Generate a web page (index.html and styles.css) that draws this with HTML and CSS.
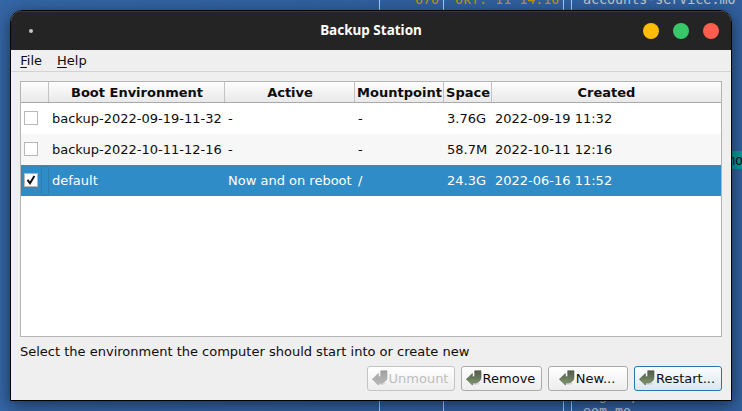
FILE: index.html
```html
<!DOCTYPE html>
<html lang="en">
<head>
<meta charset="utf-8">
<title>Backup Station</title>
<link rel="stylesheet" href="styles.css">
</head>
<body>
<svg class="defs" width="0" height="0" aria-hidden="true">
  <defs>
    <linearGradient id="g-green" x1="0" y1="0" x2="0" y2="1"><stop offset="0" stop-color="#555c50"/><stop offset=".5" stop-color="#66785a"/><stop offset="1" stop-color="#84a06e"/></linearGradient>
    <linearGradient id="g-gray" x1="0" y1="0" x2="0" y2="1"><stop offset="0" stop-color="#a2a2a2"/><stop offset="1" stop-color="#b8b8b8"/></linearGradient>
    <radialGradient id="g-shadow"><stop offset="0" stop-color="#000" stop-opacity=".2"/><stop offset="1" stop-color="#000" stop-opacity="0"/></radialGradient>
    <symbol id="enter" viewBox="0 0 16 16">
      <ellipse cx="9" cy="13.6" rx="6" ry="1.8" fill="url(#g-shadow)" stroke="none"/>
      <path d="M8.7 .7h6.3v6.6q0 4.4-5.1 5.4H6.4v2.3L.4 9.2l6-5.7v3.2h1.5q.8 0 .8-.9z"/>
    </symbol>
  </defs>
</svg>
<div class="desktop">
  <span class="rule r1"></span><span class="rule r2"></span><span class="rule r3"></span><span class="rule r4"></span>
  <span class="term size">670</span>
  <span class="term date">окт. 11 14:10</span>
  <span class="term name">accounts-service.mo</span>
  <span class="term name low1">engrampa.mo</span>
  <span class="term name low2">eom.mo</span>
  <span class="term picked">mo</span>
  <main class="window">
    <header class="titlebar">
      <span class="dot"></span>
      <h1>Backup Station</h1>
      <div class="controls"><i class="yellow"></i><i class="green"></i><i class="red"></i></div>
    </header>
    <nav class="menu"><span><u>F</u>ile</span><span><u>H</u>elp</span></nav>
    <section class="content">
      <div class="table">
        <div class="row head"><b></b><b>Boot Environment</b><b>Active</b><b>Mountpoint</b><b>Space</b><b>Created</b></div>
        <div class="row"><span class="check"><i></i></span><span>backup-2022-09-19-11-32</span><span>-</span><span>-</span><span>3.76G</span><span>2022-09-19 11:32</span></div>
        <div class="row alt"><span class="check"><i></i></span><span>backup-2022-10-11-12-16</span><span>-</span><span>-</span><span>58.7M</span><span>2022-10-11 12:16</span></div>
        <div class="row selected"><span class="check"><i><svg width="12" height="12" viewBox="0 0 12 12"><path d="M2.5 5.8 5 9.3 9.4 2" fill="none" stroke="#111" stroke-width="2"/></svg></i><em></em></span><span>default</span><span>Now and on reboot</span><span>/</span><span>24.3G</span><span>2022-06-16 11:52</span></div>
      </div>
      <p class="hint">Select the environment the computer should start into or create new</p>
      <div class="actions">
        <button class="unmount" disabled><svg><use href="#enter"/></svg>Unmount</button>
        <button class="remove"><svg><use href="#enter"/></svg>Remove</button>
        <button class="new"><svg><use href="#enter"/></svg>New...</button>
        <button class="restart"><svg><use href="#enter"/></svg>Restart...</button>
      </div>
    </section>
  </main>
</div>
</body>
</html>
```
FILE: styles.css
```css
* { box-sizing: border-box; }
body { margin: 0; font: 13px/16px "DejaVu Sans", sans-serif; color: #0d0d0d; }
.defs { position: absolute; }
.desktop {
  position: relative; width: 742px; height: 411px; overflow: hidden;
  padding: 10px; background: linear-gradient(90deg, #3465a4, #31609f 50%, #315f9d);
}
.rule { position: absolute; top: 0; width: 1px; height: 411px; background: #c0c7cd; }
.r1 { left: 379px; }
.r2 { left: 443px; }
.r3 { left: 563px; }
.r4 { left: 571px; }
.term { position: absolute; top: -8px; font: 13.33px/16px "DejaVu Sans Mono", monospace; white-space: pre; color: #b99a08; }
.size { left: 415px; }
.date { left: 455px; }
.name { left: 583px; color: #c0c7cd; }
.low1 { top: 388px; }
.low2 { top: 404px; }
.picked { left: 727px; top: 151px; width: 15px; height: 18px; line-height: 19px; background: #06989a; color: #111; overflow: hidden; }

.window {
  position: relative; width: 722px; height: 391px; display: flex; flex-direction: column;
  border: 1px solid #000; border-radius: 12px 12px 0 0; background: #efefef;
  box-shadow: 0 4px 16px rgba(0, 0, 0, .5); overflow: hidden;
}
.titlebar {
  display: grid; grid-template-columns: 1fr auto 1fr; align-items: center;
  height: 39px; flex: none; background: #242424; border-top: 1px solid #3a3a3a; color: #fff;
}
.titlebar h1 { margin: 0 0 2px; font: bold 13.5px/18px "Noto Sans", sans-serif; }
.dot { width: 4px; height: 4px; margin: 0 0 1px 18px; border-radius: 50%; background: #c4c4c4; }
.controls { display: flex; justify-content: flex-end; gap: 14px; padding: 0 12px 1px 0; }
.controls i { width: 16px; height: 16px; border-radius: 50%; }
.yellow { background: #ffbd09; }
.green { background: #38c86a; }
.red { background: #ff5d50; }
.menu { display: flex; gap: 15px; height: 22px; flex: none; padding: 3px 9.3px; border-bottom: 1px solid #d3d3d3; }
.menu u { text-underline-offset: 2px; text-decoration-thickness: 1px; text-decoration-skip-ink: none; }
.content { padding: 9px; }
.table { width: 702px; height: 256px; border: 1px solid #b4b4b4; background: #fff; }
.row { display: grid; grid-template-columns: 28px 176px 130px 89px 48px 1fr; height: 31px; align-items: center; white-space: nowrap; }
.row > span { padding-left: 3px; }
.head { height: 21px; border-bottom: 1px solid #a9a9a9; background: linear-gradient(#fdfdfd, #e9e9e9); }
.head b { height: 20px; line-height: 21px; padding-left: 1px; text-align: center; border-right: 1px solid #c3c3c3; }
.head b:last-child { padding: 0; border: 0; }
.alt { background: #f7f7f7; }
.selected { background: #308cc6; color: #fff; }
.row > .check { display: flex; gap: 3px; height: 31px; align-items: center; }
.check i { display: flex; width: 14px; height: 14px; margin-bottom: 1px; border: 1px solid #b8b8b8; background: #fff; }
.check em { width: 8px; height: 30px; border: 1px solid #2b7eb2; border-radius: 2px; }
.hint { margin: 7px 0 0; }
.actions { display: flex; justify-content: flex-end; gap: 6px; padding-top: 6px; width: 702px; }
button {
  display: flex; align-items: center; justify-content: center; height: 25px; padding: 0 2px 0 0;
  border: 1px solid #ababab; border-radius: 3px; background: linear-gradient(#fff, #ededed);
  font: inherit; color: #0d0d0d;
}
button svg { width: 16px; height: 16px; margin: 0 1px 2px 0; fill: url(#g-green); stroke: #525d49; stroke-width: .6; flex: none; }
button:disabled { color: #bebebe; border-color: #c4c4c4; }
button:disabled svg { fill: url(#g-gray); stroke: #a0a0a0; }
.unmount { width: 88px; }
.remove { width: 81px; }
.new { width: 80px; }
.restart { width: 88px; border-color: #2776a8; background: linear-gradient(#fcfdfe, #dce6ed); }
```
